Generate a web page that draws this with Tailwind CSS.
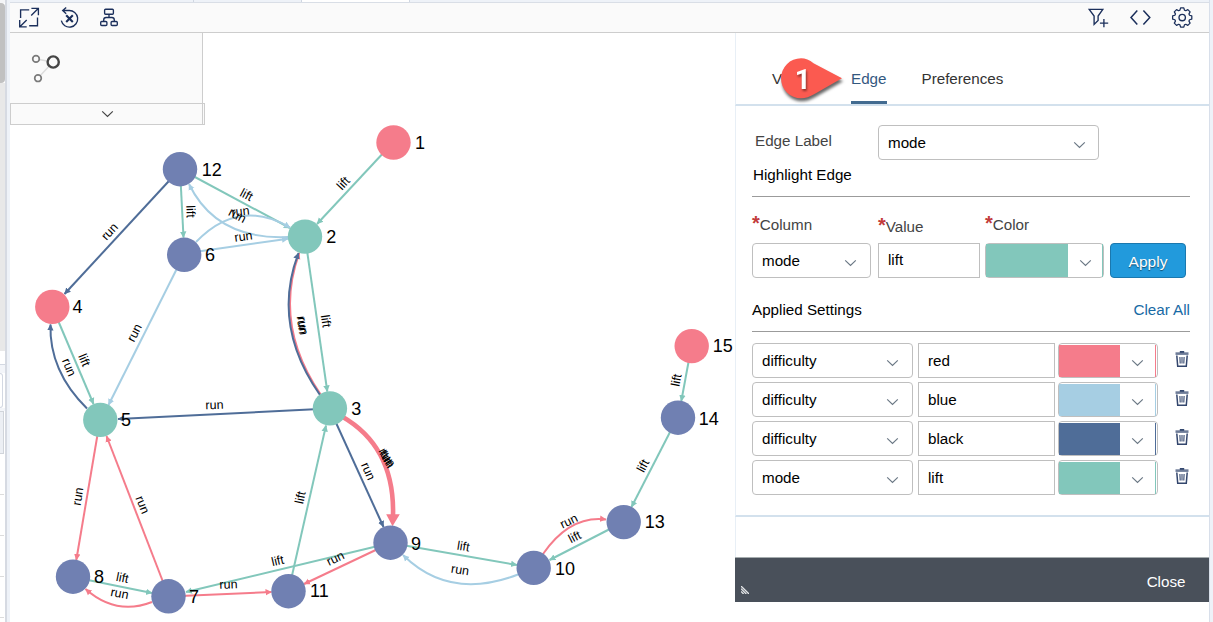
<!DOCTYPE html>
<html lang="en">
<head>
<meta charset="utf-8">
<title>Graph Viewer</title>
<script src="https://cdn.jsdelivr.net/npm/@tailwindcss/browser@4"></script>
</head>
<body class="h-[622px] w-[1213px] overflow-hidden bg-white font-['Liberation_Sans',Arial,sans-serif] text-[15.2px] leading-5 text-black">
<svg class="hidden">
  <symbol id="chev" viewBox="0 0 14 8"><path d="M1.3 1.2 7 6.6l5.7-5.4" fill="none" stroke="currentColor" stroke-width="1.3"/></symbol>
  <symbol id="trash" viewBox="0 0 14 16"><path d="M0.5 2.6h13" stroke="#6e7c98" stroke-width="2.6" fill="none"/><path d="M4.8 .9h4.4" stroke="#1f3560" stroke-width="1.6"/><path d="M1.8 4.5l.9 10.7h8.6l.9-10.7" stroke="#33466d" stroke-width="1.5" fill="none"/><path d="M4.9 6l.3 6.600M7 6v6.600M9.100 6l-.3 6.600" stroke="#33466d" stroke-width="1.1" fill="none"/></symbol>
</svg>
<div class="flex h-full">
  <!-- neighbouring pane sliver -->
  <div class="flex w-[10px] shrink-0">
    <div class="flex w-[5px] flex-col">
      <div class="h-[3px] bg-[#f4f5f7]"></div>
      <div class="h-20 rounded-r-sm bg-[#c1c1c1]"></div>
      <div class="h-[268px] bg-[#e8e8e8]"></div>
      <div class="h-[14px] border-b border-[#d3d8e2] bg-white"></div>
      <div class="h-2 bg-[#f3f5f9]"></div>
      <div class="h-[35px] w-[3px] rounded-r-sm border border-l-0 border-[#d3d8e2] bg-white"></div>
      <div class="h-[3px] bg-[#f3f5f9]"></div>
      <div class="h-[43px] w-1 border border-l-0 border-[#d0d4da] bg-[#eceff4]"></div>
      <div class="h-[41px] w-1 border-b border-[#dcdcdc]"></div>
      <div class="h-[41px] w-1 border-b border-[#dcdcdc]"></div>
      <div class="h-[41px] w-1 border-b border-[#dcdcdc]"></div>
      <div class="h-[41px] w-1 border-b border-[#dcdcdc]"></div>
    </div>
    <div class="w-[2px] bg-[#d6dae2]"></div>
    <div class="w-[3px] bg-[#eef2f8]"></div>
  </div>

  <div class="flex w-[1200px] shrink-0 flex-col border-r border-[#d8dfea]">
    <div class="flex h-[3px] border-b border-[#d9dee6] bg-[#eef2f8]">
      <div class="w-[184px] border-r border-[#d0d7e2]"></div>
      <div class="w-[108px] border-r border-[#d0d7e2]"></div>
      <div class="w-[108px] border-r border-[#d0d7e2] bg-white"></div>
    </div>
    <div class="flex h-[30px] items-center justify-between border-b border-[#cdcdcd] bg-[#fafafa] text-[#1b2f5b]">
      <svg class="h-[29px] w-[120px]" viewBox="10 3 120 29" fill="none" stroke="currentColor" stroke-width="1.35">
        <path d="M20.6 18v-8.1h8.6M31.4 8.3h7v7M38.2 8.5l-7 7M37.5 17.4v8.3h-8.3M26.7 26.9h-7v-7M19.9 26.7l6.8-6.8"/>
        <path d="M61.3 20.7a8.3 8.3 0 1 0 7.6-10.2h-6.1M66.2 7.4l-3.5 3.1 3.5 3.2"/>
        <path d="M66.2 15.3l6.6 6.6M72.8 15.3l-6.6 6.6" stroke-width="2.1"/>
        <rect x="104.6" y="9.2" width="8.8" height="5" rx="1"/><rect x="100.7" y="21.5" width="6.2" height="4" rx="1"/><rect x="111.1" y="21.5" width="6.2" height="4" rx="1"/>
        <path d="M109 14.2v3.2M103.7 21.5v-1.6q0-2.4 2.4-2.4h5.8q2.4 0 2.4 2.4v1.6"/>
      </svg>
      <svg class="h-[29px] w-[129px]" viewBox="1080 3 129 29" fill="none" stroke="currentColor" stroke-width="1.35">
        <path d="M1089.2 9.3h13.6l-4.7 6.7v4.4l-4 4v-8.4zM1103.9 18.9v8.3M1099.9 23.1h8.3"/>
        <path d="M1137.3 10.4l-6.3 7.1 6.3 7.1M1143.4 10.4l6.4 7.1-6.4 7.1" stroke-width="1.5"/>
        <circle cx="1182.2" cy="17.5" r="3.2"/>
        <path transform="translate(1182.2 17.5) scale(.94)" d="M-1.7-10.2h3.4l.7 2.4 1.4.6 2.2-1.2 2.4 2.4-1.2 2.2.6 1.4 2.4.7v3.4l-2.4.7-.6 1.4 1.2 2.2-2.4 2.4-2.2-1.2-1.4.6-.7 2.4h-3.4l-.7-2.4-1.4-.6-2.2 1.2-2.4-2.4 1.2-2.2-.6-1.4-2.4-.7v-3.4l2.4-.7.6-1.4-1.2-2.2 2.4-2.4 2.2 1.2 1.4-.6z" stroke-linejoin="round"/>
      </svg>
    </div>

    <div class="flex h-[589px]">
      <!-- graph canvas -->
      <div class="relative w-[725px] shrink-0">
        <svg class="block h-[589px] w-[725px]" viewBox="10 33 725 589">
          <defs>
            <marker id="mt" markerUnits="userSpaceOnUse" markerWidth="7" markerHeight="8" refX="6" refY="4" orient="auto"><path d="M0 .8 6.4 4 0 7.2z" fill="#82c7bb"/></marker>
            <marker id="mn" markerUnits="userSpaceOnUse" markerWidth="7" markerHeight="8" refX="6" refY="4" orient="auto"><path d="M0 .8 6.4 4 0 7.2z" fill="#4f6d98"/></marker>
            <marker id="mb" markerUnits="userSpaceOnUse" markerWidth="7" markerHeight="8" refX="6" refY="4" orient="auto"><path d="M0 .8 6.4 4 0 7.2z" fill="#a6cee3"/></marker>
            <marker id="mr" markerUnits="userSpaceOnUse" markerWidth="7" markerHeight="8" refX="6" refY="4" orient="auto"><path d="M0 .8 6.4 4 0 7.2z" fill="#f57c8b"/></marker>
          </defs>
          <g fill="none" stroke-width="2">
            <g stroke="#82c7bb">
              <path d="M393.5 142 317 224" marker-end="url(#mt)"/>
              <path d="M180 169 183.5 237.5" marker-end="url(#mt)"/>
              <path d="M180 169 290 228" marker-end="url(#mt)"/>
              <path d="M52.3 307 93.5 404" marker-end="url(#mt)"/>
              <path d="M305 236.5 327.3 391.5" marker-end="url(#mt)"/>
              <path d="M73 577 152 593" marker-end="url(#mt)"/>
              <path d="M390.5 543 186 592" marker-end="url(#mt)"/>
              <path d="M288.5 591 326 425.5" marker-end="url(#mt)"/>
              <path d="M390.5 543 517 565" marker-end="url(#mt)"/>
              <path d="M623.5 522 549.5 560" marker-end="url(#mt)"/>
              <path d="M691.5 346 681.3 401" marker-end="url(#mt)"/>
              <path d="M677.5 417.5 631.5 507" marker-end="url(#mt)"/>
            </g>
            <g stroke="#a6cee3">
              <path d="M288 237Q216 240 189 184" marker-end="url(#mb)"/>
              <path d="M196 242Q238.5 197.5 290 227.5" marker-end="url(#mb)"/>
              <path d="M184 253.5 288 238.8" marker-end="url(#mb)"/>
              <path d="M184 254.5 108.5 405" marker-end="url(#mb)"/>
              <path d="M518 574.5Q449.5 601 403 555" marker-end="url(#mb)"/>
            </g>
            <g stroke="#f57c8b">
              <path d="M321 395Q273 325 299.3 253" marker-end="url(#mr)"/>
              <path d="M100 420 76.3 560" marker-end="url(#mr)"/>
              <path d="M168.5 596 106.5 436" marker-end="url(#mr)"/>
              <path d="M152 602Q116 616 85.5 589" marker-end="url(#mr)"/>
              <path d="M168.5 596.5 271.5 592" marker-end="url(#mr)"/>
              <path d="M390.5 543 304 584" marker-end="url(#mr)"/>
              <path d="M543 554Q570 515 606 519.5" marker-end="url(#mr)"/>
              <path d="M342 416.500Q395 447 393 516" stroke-width="4.6"/>
              <path d="M386.200 514.200h13.600l-7.300 12z" fill="#f57c8b" stroke="none"/>
            </g>
            <g stroke="#4f6d98">
              <path d="M180 169 64.5 294" marker-end="url(#mn)"/>
              <path d="M87 408.5Q49 371 50.5 324.5" marker-end="url(#mn)"/>
              <path d="M320 395Q271 325 298.5 253" marker-end="url(#mn)"/>
              <path d="M329.5 408.5 118 419" marker-end="url(#mn)"/>
              <path d="M329.5 408.5 383.5 527" marker-end="url(#mn)"/>
            </g>
          </g>
          <g fill="#7080b2">
            <circle cx="180" cy="169.2" r="17.2"/><circle cx="184.2" cy="254.8" r="17.2"/><circle cx="73" cy="576.7" r="17.2"/><circle cx="168.5" cy="596.3" r="17.2"/><circle cx="288.5" cy="591.2" r="17.2"/><circle cx="390.5" cy="542.7" r="17.2"/><circle cx="533.7" cy="567.9" r="17.2"/><circle cx="623.7" cy="522.1" r="17.2"/><circle cx="678" cy="417.7" r="17.2"/>
          </g>
          <g fill="#f57c8b"><circle cx="393.5" cy="142.5" r="17.2"/><circle cx="52.3" cy="306.9" r="17.2"/><circle cx="691.7" cy="346.100" r="17.2"/></g>
          <g fill="#82c7bb"><circle cx="305" cy="236.600" r="17.2"/><circle cx="329.900" cy="408.400" r="17.2"/><circle cx="100.3" cy="419.900" r="17.2"/></g>
          <g font-size="18">
            <text x="415.1" y="148.5">1</text><text x="326.3" y="242.5">2</text><text x="351.300" y="414.5">3</text><text x="72.5" y="313.3">4</text><text x="121" y="426">5</text><text x="205" y="261">6</text><text x="189" y="603">7</text><text x="94" y="583">8</text><text x="411" y="549.5">9</text><text x="555" y="574.5">10</text><text x="310" y="597.3">11</text><text x="201.700" y="176">12</text><text x="644.8" y="528.3">13</text><text x="698.800" y="424.5">14</text><text x="712.7" y="352.3">15</text>
          </g>
          <g font-size="12.5" text-anchor="middle">
            <text transform="translate(343 183) rotate(-47)" y="4.5">lift</text>
            <text transform="translate(110 232) rotate(-47)" y="3.5">run</text>
            <text transform="translate(191 211.5) rotate(88)" y="4.5">lift</text>
            <text transform="translate(246.7 194.5) rotate(28)" y="4.5">lift</text>
            <text transform="translate(240.5 212) rotate(-6)" y="3.5">run</text>
            <text transform="translate(237 216) rotate(28)" y="3.5">run</text>
            <text transform="translate(243.5 237) rotate(-8)" y="3.5">run</text>
            <text transform="translate(135 333) rotate(-63)" y="3.5">run</text>
            <text transform="translate(84.5 360) rotate(67)" y="4.5">lift</text>
            <text transform="translate(68.5 367.5) rotate(67)" y="3.5">run</text>
            <text transform="translate(214.5 405.5) rotate(-2)" y="3.5">run</text>
            <text transform="translate(302.5 326) rotate(82)" y="3.5">run</text>
            <text transform="translate(301.5 325) rotate(82)" y="3.5">run</text>
            <text transform="translate(326.2 321) rotate(82)" y="4.5">lift</text>
            <text transform="translate(367.7 471.5) rotate(66)" y="3.5">run</text>
            <text transform="translate(385.5 457) rotate(62)" y="3.5">run</text>
            <text transform="translate(387.5 458) rotate(62)" y="3.5">run</text>
            <text transform="translate(386.5 459.5) rotate(62)" y="3.5">run</text>
            <text transform="translate(300 497.5) rotate(-78)" y="4.5">lift</text>
            <text transform="translate(277.5 560.5) rotate(-13)" y="4.5">lift</text>
            <text transform="translate(335.5 559) rotate(-26)" y="3.5">run</text>
            <text transform="translate(228.5 585) rotate(-2)" y="3.5">run</text>
            <text transform="translate(78.5 496.5) rotate(-81)" y="3.5">run</text>
            <text transform="translate(142 505) rotate(68)" y="3.5">run</text>
            <text transform="translate(122.5 577.5) rotate(11)" y="4.5">lift</text>
            <text transform="translate(119.5 594) rotate(11)" y="3.5">run</text>
            <text transform="translate(463.5 546) rotate(9)" y="4.5">lift</text>
            <text transform="translate(460 570.5) rotate(9)" y="3.5">run</text>
            <text transform="translate(569 521.7) rotate(-26)" y="3.5">run</text>
            <text transform="translate(574.5 536.7) rotate(-27)" y="4.5">lift</text>
            <text transform="translate(676 380) rotate(-79)" y="4.5">lift</text>
            <text transform="translate(642.7 465.7) rotate(-62)" y="4.5">lift</text>
          </g>
        </svg>
        <!-- collapsible overview -->
        <div class="absolute left-0 top-0 w-[195px]">
          <div class="h-[70px] w-[193px] border-r border-[#cdcdcd] bg-[#fafafa]">
            <svg class="h-[70px] w-[100px]" viewBox="10 33 100 70" fill="none">
              <path d="M36 59l17 3-15 16" stroke="#dcdcdc" stroke-width="1.5"/>
              <g fill="#fafafa"><circle cx="36" cy="58.9" r="3.3" stroke="#7a7a7a" stroke-width="1.7"/><circle cx="38" cy="78.2" r="3.3" stroke="#7a7a7a" stroke-width="1.7"/><circle cx="53.2" cy="62" r="5.6" stroke="#454545" stroke-width="2.4"/></g>
            </svg>
          </div>
          <div class="flex h-[22px] border border-[#cdcdcd] bg-[#fafafa] text-[#444]">
            <div class="flex w-[192px] items-center justify-center border-r border-[#cdcdcd] pl-[2px]"><svg class="h-2 w-[13px]"><use href="#chev"/></svg></div>
          </div>
        </div>
      </div>

      <!-- settings panel -->
      <div class="h-[569px] w-[474px] shrink-0">
        <div class="relative flex h-[73px] items-end border-b-2 border-l border-[#d3e1ed] border-l-[#e8eff6] pl-9 text-[#333]">
          <div class="h-[35px] w-[79px]">V</div>
          <div class="h-[35px] w-9 border-b-[3px] border-[#426b90] text-[#33587f]">Edge</div>
          <div class="ml-[34.5px] h-[35px]">Preferences</div>
          <svg class="absolute left-[40px] top-[20px] h-[50px] w-[72px] drop-shadow-[1px_3px_1.5px_rgba(0,0,0,.6)]" viewBox="776 53 72 50">
            <path d="M842 78.3 813.5 63.2Q807.5 58.3 801 58.3a20 20 0 0 0 0 40q6.5 0 13.5-4.2z" fill="#fb5a50"/>
            <text x="802.7" y="89" text-anchor="middle" font-size="28" font-weight="700" fill="#fff" font-family="Roboto" class="drop-shadow-[1px_2px_1px_rgba(0,0,0,.45)]">1</text>
          </svg>
        </div>

        <div class="h-[411px] border-b-2 border-l border-[#d3e1ed] border-l-[#e8eff6] pl-4">
          <div class="flex pt-[19px]">
            <div class="w-[126px] pl-[3px] pt-[6px] text-[#444]">Edge Label</div>
            <div class="flex h-[35px] w-[221px] items-center justify-between rounded-sm border border-[#bfbfbf] pl-[9px] pr-3">mode<svg class="mt-1 h-2 w-[13px] text-[#6b7885]"><use href="#chev"/></svg></div>
          </div>
          <div class="mt-[5px] h-8 w-[438px] border-b border-[#9b9b9b] pl-px">Highlight Edge</div>
          <div class="mt-[18px] flex h-7 text-[#444]">
            <div class="w-[126px]"><b class="text-[20px] leading-4 text-[#c23b3b]">*</b>Column</div>
            <div class="w-[107px] pt-[2px]"><b class="text-[20px] leading-4 text-[#c23b3b]">*</b>Value</div>
            <div><b class="text-[20px] leading-4 text-[#c23b3b]">*</b>Color</div>
          </div>
          <div class="flex h-[35px]">
            <div class="mr-[7px] flex w-[119px] items-center justify-between rounded-sm border border-[#bfbfbf] pl-[9px] pr-[13px]">mode<svg class="mt-1 h-2 w-[13px] text-[#6b7885]"><use href="#chev"/></svg></div>
            <div class="mr-[5px] w-[102px] border border-[#bfbfbf] pl-[9px] pt-[6px]">lift</div>
            <div class="mr-[6px] flex w-[119px] items-center rounded-sm border border-[#bfbfbf]"><div class="h-full w-[82px] bg-[#82c7bb]"></div><svg class="ml-[11px] mt-1 h-2 w-[13px] text-[#6b7885]"><use href="#chev"/></svg><div class="ml-auto h-full w-px bg-[#82c7bb]"></div></div>
            <div class="w-[76px] rounded-sm border border-[#1b78ae] bg-[#229adc] pt-2 text-center text-[15.5px] text-white [text-shadow:0_1px_1px_rgba(0,0,0,.5)]">Apply</div>
          </div>
          <div class="mt-[22px] flex h-8 w-[438px] justify-between border-b border-[#9b9b9b]"><span>Applied Settings</span><span class="text-[#186aa5]">Clear All</span></div>
          <div class="mt-[11px] flex flex-col gap-1">
            <div class="flex h-[35px]">
              <div class="mr-[5px] flex w-[161px] items-center justify-between rounded-sm border border-[#bfbfbf] pl-[9px] pr-[13px]">difficulty<svg class="mt-1 h-2 w-[13px] text-[#6b7885]"><use href="#chev"/></svg></div>
              <div class="mr-[3px] flex w-[137px] items-center border border-[#bfbfbf] pl-[9px]">red</div>
              <div class="mr-[17px] flex w-[100px] items-center rounded-sm border border-[#bfbfbf] pt-px"><div class="h-full w-[61px] bg-[#f57c8b]"></div><svg class="ml-[11px] mt-1 h-2 w-[13px] text-[#6b7885]"><use href="#chev"/></svg><div class="ml-auto mr-px h-full w-px bg-[#f57c8b]"></div></div>
              <svg class="mt-2 h-4 w-[14px]"><use href="#trash"/></svg>
            </div>
            <div class="flex h-[35px]">
              <div class="mr-[5px] flex w-[161px] items-center justify-between rounded-sm border border-[#bfbfbf] pl-[9px] pr-[13px]">difficulty<svg class="mt-1 h-2 w-[13px] text-[#6b7885]"><use href="#chev"/></svg></div>
              <div class="mr-[3px] flex w-[137px] items-center border border-[#bfbfbf] pl-[9px]">blue</div>
              <div class="mr-[17px] flex w-[100px] items-center rounded-sm border border-[#bfbfbf] pt-px"><div class="h-full w-[61px] bg-[#a6cee3]"></div><svg class="ml-[11px] mt-1 h-2 w-[13px] text-[#6b7885]"><use href="#chev"/></svg><div class="ml-auto mr-px h-full w-px bg-[#a6cee3]"></div></div>
              <svg class="mt-2 h-4 w-[14px]"><use href="#trash"/></svg>
            </div>
            <div class="flex h-[35px]">
              <div class="mr-[5px] flex w-[161px] items-center justify-between rounded-sm border border-[#bfbfbf] pl-[9px] pr-[13px]">difficulty<svg class="mt-1 h-2 w-[13px] text-[#6b7885]"><use href="#chev"/></svg></div>
              <div class="mr-[3px] flex w-[137px] items-center border border-[#bfbfbf] pl-[9px]">black</div>
              <div class="mr-[17px] flex w-[100px] items-center rounded-sm border border-[#bfbfbf] pt-px"><div class="h-full w-[61px] bg-[#4f6d98]"></div><svg class="ml-[11px] mt-1 h-2 w-[13px] text-[#6b7885]"><use href="#chev"/></svg><div class="ml-auto mr-px h-full w-px bg-[#4f6d98]"></div></div>
              <svg class="mt-2 h-4 w-[14px]"><use href="#trash"/></svg>
            </div>
            <div class="flex h-[35px]">
              <div class="mr-[5px] flex w-[161px] items-center justify-between rounded-sm border border-[#bfbfbf] pl-[9px] pr-[13px]">mode<svg class="mt-1 h-2 w-[13px] text-[#6b7885]"><use href="#chev"/></svg></div>
              <div class="mr-[3px] flex w-[137px] items-center border border-[#bfbfbf] pl-[9px]">lift</div>
              <div class="mr-[17px] flex w-[100px] items-center rounded-sm border border-[#bfbfbf] pt-px"><div class="h-full w-[61px] bg-[#82c7bb]"></div><svg class="ml-[11px] mt-1 h-2 w-[13px] text-[#6b7885]"><use href="#chev"/></svg><div class="ml-auto mr-px h-full w-px bg-[#82c7bb]"></div></div>
              <svg class="mt-2 h-4 w-[14px]"><use href="#trash"/></svg>
            </div>
          </div>
        </div>
        <div class="h-10 border-l border-[#e8eff6]"></div>
        <div class="flex h-[45px] items-center justify-between border-t border-[#a5acae] bg-[#49505a] pl-[6px] pr-[23.5px] text-[15.2px] text-white">
          <svg class="mt-5 h-2 w-2" viewBox="0 0 8 8" stroke="#e4e6e8" stroke-width="1.3"><path d="M0 0l8 8M0 2.700l5.300 5.300M0 5.400l2.600 2.600"/></svg>
          <span class="mt-[3px]">Close</span>
        </div>
      </div>
    </div>
  </div>
  <div class="flex-1 bg-[#eef2f8]"></div>
</div>
</body>
</html>
